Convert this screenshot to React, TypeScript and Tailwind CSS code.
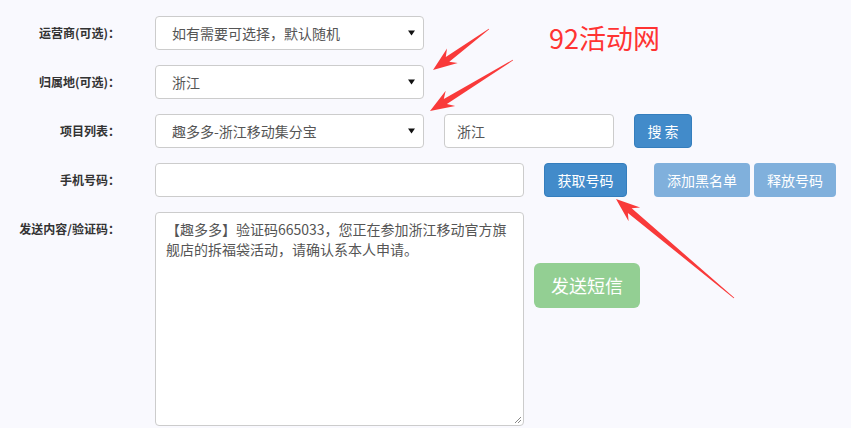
import React from "react";

const FONT = '"Microsoft YaHei", "Noto Sans CJK SC", "Noto Sans", sans-serif';

type Pt = [number, number];

// tapered red arrow polygon from tail to tip
function arrowPoints(tail: Pt, tip: Pt, head = 22, wing = 9, neck = 3) {
	const dx = tip[0] - tail[0];
	const dy = tip[1] - tail[1];
	const len = Math.hypot(dx, dy);
	const ux = dx / len;
	const uy = dy / len;
	const nx = -uy;
	const ny = ux;
	const at = (t: number, w: number): string =>
		`${(tail[0] + ux * t + nx * w).toFixed(1)},${(tail[1] + uy * t + ny * w).toFixed(1)}`;
	const base = len - head;
	return [
		at(0, 0.4),
		at(base + 4, neck),
		at(base - 2, wing),
		at(len, 0),
		at(base - 2, -wing),
		at(base + 4, -neck),
		at(0, -0.4),
	].join(" ");
}

function Caret() {
	return (
		<svg width="7" height="6" viewBox="0 0 7 6" className="shrink-0">
			<path d="M0 0.5 L7 0.5 L3.5 5.5 Z" fill="#111" />
		</svg>
	);
}

function FakeSelect({ value, width }: { value: string; width: string }) {
	return (
		<div
			className={`${width} h-[34px] flex items-center justify-between pl-[16px] pr-[8px] bg-white border border-[#cccccc] rounded-[4px] text-[14px] text-[#555]`}
		>
			<span>{value}</span>
			<Caret />
		</div>
	);
}

function Label({ children, top }: { children: React.ReactNode; top?: boolean }) {
	return (
		<div
			className={`w-[120px] shrink-0 text-right text-[12px] font-bold text-[#333] ${top ? "self-start pt-[8px]" : ""}`}
		>
			{children}
		</div>
	);
}

function Row({ children, className = "" }: { children: React.ReactNode; className?: string }) {
	return <div className={`flex items-center ${className}`}>{children}</div>;
}

export default function App() {
	return (
		<div
			className="relative w-[851px] h-[428px] overflow-hidden bg-[#f9f9fe]"
			style={{ fontFamily: FONT }}
		>
			<div className="flex flex-col gap-[15px] pt-[16px]">
				<Row>
					<Label>运营商(可选)：</Label>
					<div className="ml-[35px]">
						<FakeSelect value="如有需要可选择，默认随机" width="w-[269px]" />
					</div>
				</Row>
				<Row>
					<Label>归属地(可选)：</Label>
					<div className="ml-[35px]">
						<FakeSelect value="浙江" width="w-[269px]" />
					</div>
				</Row>
				<Row>
					<Label>项目列表：</Label>
					<div className="ml-[35px] flex items-center">
						<FakeSelect value="趣多多-浙江移动集分宝" width="w-[269px]" />
						<div className="ml-[20px] w-[170px] h-[34px] flex items-center px-[12px] bg-white border border-[#cccccc] rounded-[4px] text-[14px] text-[#555]">
							浙江
						</div>
						<button className="ml-[20px] w-[58px] h-[34px] rounded-[4px] bg-[#428bca] border border-[#357ebd] text-white text-[14px]">
							搜 索
						</button>
					</div>
				</Row>
				<Row>
					<Label>手机号码：</Label>
					<div className="ml-[35px] flex items-center">
						<div className="w-[369px] h-[34px] bg-white border border-[#cccccc] rounded-[4px]" />
						<button className="ml-[20px] w-[83px] h-[34px] rounded-[4px] bg-[#428bca] border border-[#357ebd] text-white text-[14px]">
							获取号码
						</button>
						<button className="ml-[27px] w-[96px] h-[34px] rounded-[4px] bg-[#80b0dc] text-white text-[14px]">
							添加黑名单
						</button>
						<button className="ml-[4px] w-[82px] h-[34px] rounded-[4px] bg-[#80b0dc] text-white text-[14px]">
							释放号码
						</button>
					</div>
				</Row>
				<Row className="items-start">
					<Label top>发送内容/验证码：</Label>
					<div className="ml-[35px] flex items-start">
						<div className="relative w-[369px] h-[214px] bg-white border border-[#cccccc] rounded-[4px] px-[10px] py-[6px] text-[14px] leading-[20px] text-[#555]">
							<p>【趣多多】验证码665033，您正在参加浙江移动官方旗舰店的拆福袋活动，请确认系本人申请。</p>
							<svg width="9" height="9" viewBox="0 0 9 9" className="absolute right-[1px] bottom-[1px]">
								<path d="M8 2 L2 8 M8 5 L5 8" stroke="#888" strokeWidth="1" />
							</svg>
						</div>
						<button className="ml-[10px] mt-[51px] w-[106px] h-[45px] rounded-[6px] bg-[#93cf93] text-white text-[18px]">
							发送短信
						</button>
					</div>
				</Row>
			</div>

			<div className="absolute left-[549px] top-[20px] text-[27px] leading-[36px] text-[#ff3333]">
				92活动网
			</div>

			<svg className="absolute inset-0 pointer-events-none" width="851" height="428">
				<polygon points={arrowPoints([489, 29], [433, 70])} fill="#f93a3a" />
				<polygon points={arrowPoints([513, 60], [430, 111])} fill="#f93a3a" />
				<polygon points={arrowPoints([734, 298], [616, 199])} fill="#f93a3a" />
			</svg>
		</div>
	);
}
